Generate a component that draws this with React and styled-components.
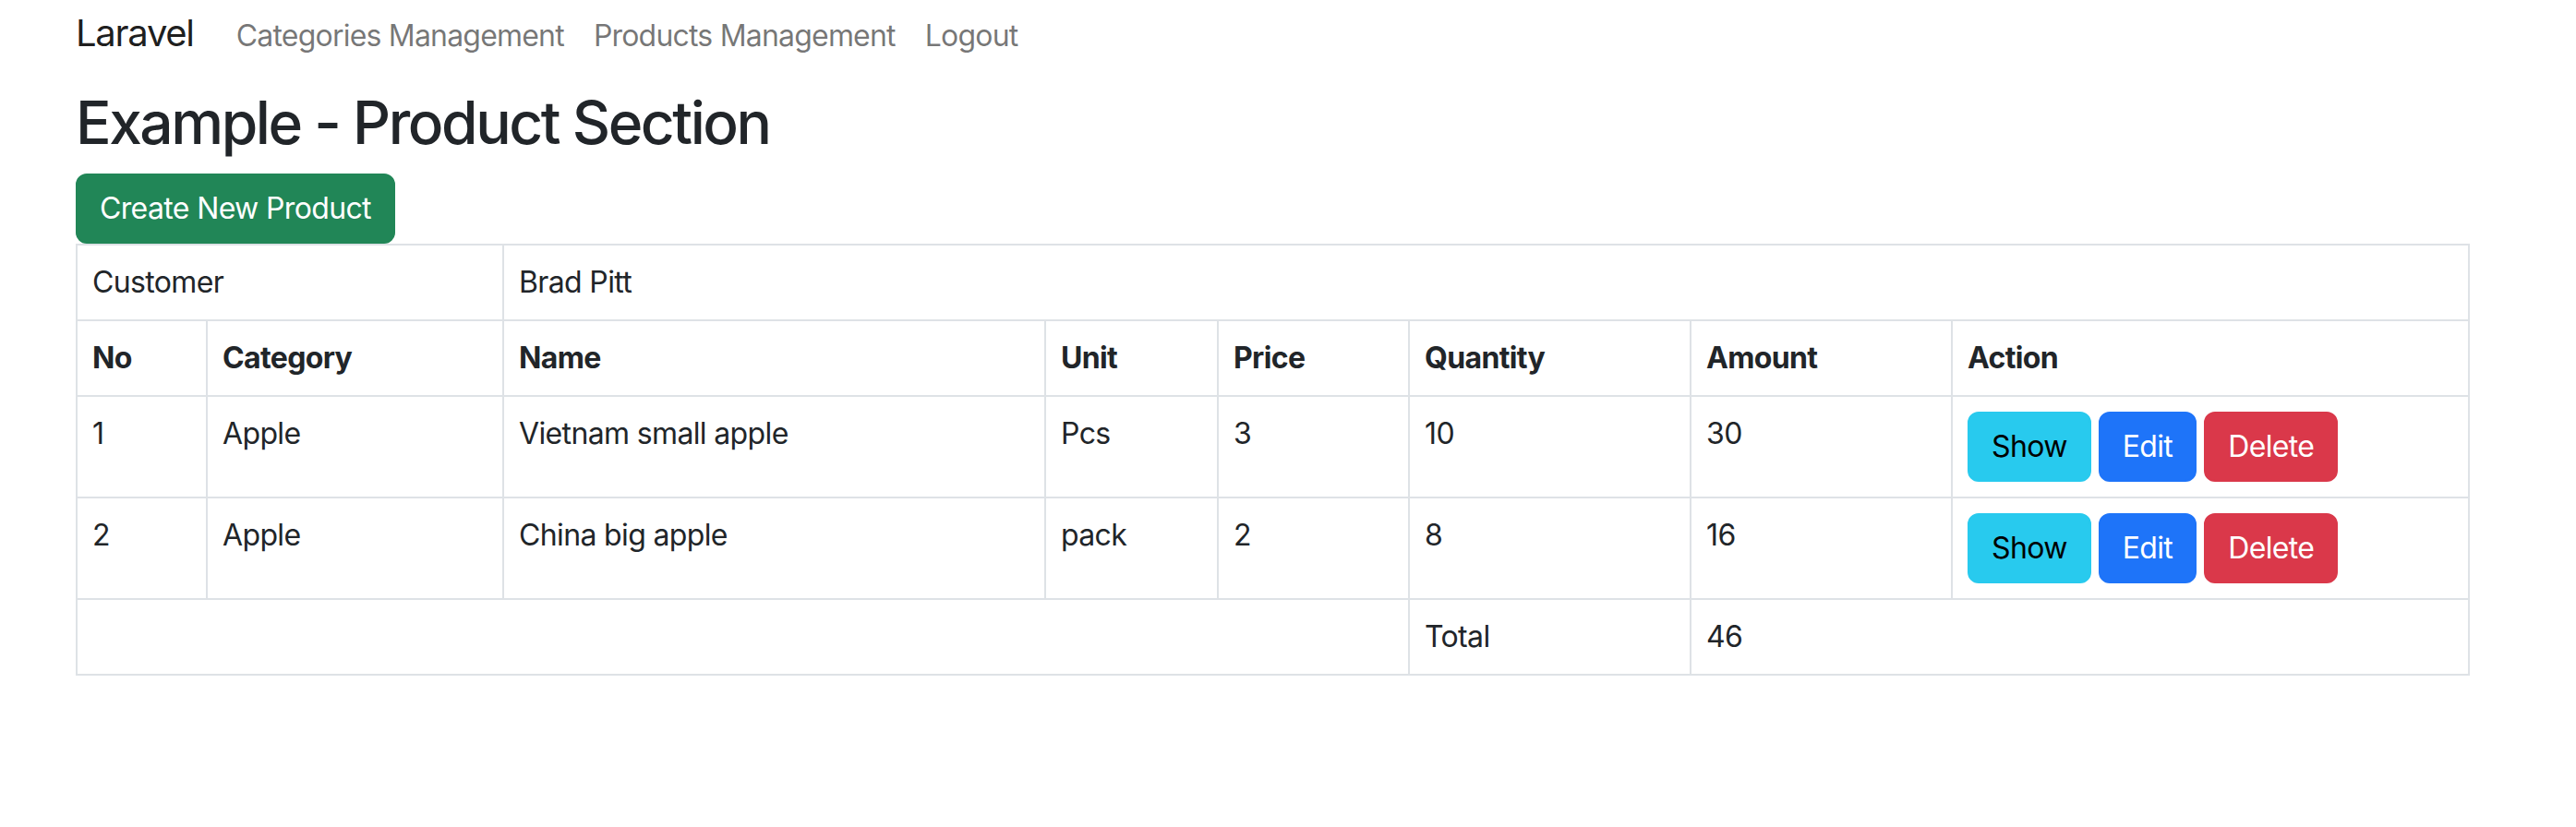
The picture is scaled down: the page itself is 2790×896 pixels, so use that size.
import styled, { createGlobalStyle } from "styled-components";

const GlobalStyle = createGlobalStyle`
    body {
        margin: 0;
        background: #fff;
        color: #212529;
        font-family: Inter, "Noto Sans", sans-serif;
        font-size: 32px;
        line-height: 1.5;
        letter-spacing: -0.02em;
    }
    * {
        box-sizing: border-box;
    }
`;

const columns = [141, 321, 587, 187, 207, 305, 283, 560];

const products = [
    { no: 1, category: "Apple", name: "Vietnam small apple", unit: "Pcs", price: 3, qty: 10, amount: 30 },
    { no: 2, category: "Apple", name: "China big apple", unit: "pack", price: 2, qty: 8, amount: 16 },
];

const App = () => {
    const total = products.reduce((sum, p) => sum + p.amount, 0);

    return (
        <>
            <GlobalStyle />
            <Page>
                <Nav>
                    <Brand>Laravel</Brand>
                    <NavLink>Categories Management</NavLink>
                    <NavLink>Products Management</NavLink>
                    <NavLink>Logout</NavLink>
                </Nav>
                <Heading>Example - Product Section</Heading>
                <Button variant="success">Create New Product</Button>
                <Table>
                    <colgroup>
                        {columns.map((w, i) => (
                            <Col key={i} w={w} />
                        ))}
                    </colgroup>
                    <tbody>
                        <tr>
                            <Cell colSpan={2}>Customer</Cell>
                            <Cell colSpan={6}>Brad Pitt</Cell>
                        </tr>
                        <tr>
                            <HeadCell>No</HeadCell>
                            <HeadCell>Category</HeadCell>
                            <HeadCell>Name</HeadCell>
                            <HeadCell>Unit</HeadCell>
                            <HeadCell>Price</HeadCell>
                            <HeadCell>Quantity</HeadCell>
                            <HeadCell>Amount</HeadCell>
                            <HeadCell>Action</HeadCell>
                        </tr>
                        {products.map((p) => (
                            <tr key={p.no}>
                                <Cell>{p.no}</Cell>
                                <Cell>{p.category}</Cell>
                                <Cell>{p.name}</Cell>
                                <Cell>{p.unit}</Cell>
                                <Cell>{p.price}</Cell>
                                <Cell>{p.qty}</Cell>
                                <Cell>{p.amount}</Cell>
                                <Cell>
                                    <Actions>
                                        <Button variant="info">Show</Button>
                                        <Button variant="primary">Edit</Button>
                                        <Button variant="danger">Delete</Button>
                                    </Actions>
                                </Cell>
                            </tr>
                        ))}
                        <tr>
                            <Cell colSpan={5}></Cell>
                            <Cell>Total</Cell>
                            <Cell colSpan={2}>{total}</Cell>
                        </tr>
                    </tbody>
                </Table>
            </Page>
        </>
    );
};

const variants = {
    success: { bg: "#218657", color: "#fff" },
    info: { bg: "#28caee", color: "#000" },
    primary: { bg: "#1e74f9", color: "#fff" },
    danger: { bg: "#da384a", color: "#fff" },
};

const Page = styled.div`
    padding: 0 0 0 82px;
`;

const Nav = styled.nav`
    display: flex;
    align-items: baseline;
    padding: 6px 0 29px;
`;

const Brand = styled.a`
    font-size: 40px;
    line-height: 60px;
    letter-spacing: -0.032em;
    color: rgba(0, 0, 0, 0.9);
    margin-right: 30px;
    cursor: pointer;
`;

const NavLink = styled.a`
    font-size: 32px;
    line-height: 48px;
    padding: 0 16px;
    letter-spacing: -0.025em;
    color: rgba(0, 0, 0, 0.55);
    cursor: pointer;
`;

const Heading = styled.h2`
    margin: 0 0 16px;
    font-size: 64px;
    font-weight: 500;
    line-height: 1.2;
    letter-spacing: -0.038em;
    color: #212529;
`;

const Button = styled.button`
    display: inline-block;
    font-family: inherit;
    font-size: 32px;
    line-height: 48px;
    letter-spacing: inherit;
    padding: 12px 24px;
    border: 2px solid ${(props) => variants[props.variant].bg};
    border-radius: 12px;
    background-color: ${(props) => variants[props.variant].bg};
    color: ${(props) => variants[props.variant].color};
    cursor: pointer;
`;

const Table = styled.table`
    table-layout: fixed;
    border-collapse: collapse;
    width: 2591px;
    margin: 0;
    vertical-align: top;
`;

const Col = styled.col`
    width: ${(props) => props.w}px;
`;

const Cell = styled.td`
    height: 82px;
    padding: 16px;
    border: 2px solid #dee2e6;
    vertical-align: top;
    color: #212529;
`;

const HeadCell = styled.th`
    padding: 16px;
    border: 2px solid #dee2e6;
    text-align: left;
    font-weight: 700;
    vertical-align: top;
    color: #212529;
`;

const Actions = styled.div`
    display: flex;
    gap: 8px;
`;

export default App;
